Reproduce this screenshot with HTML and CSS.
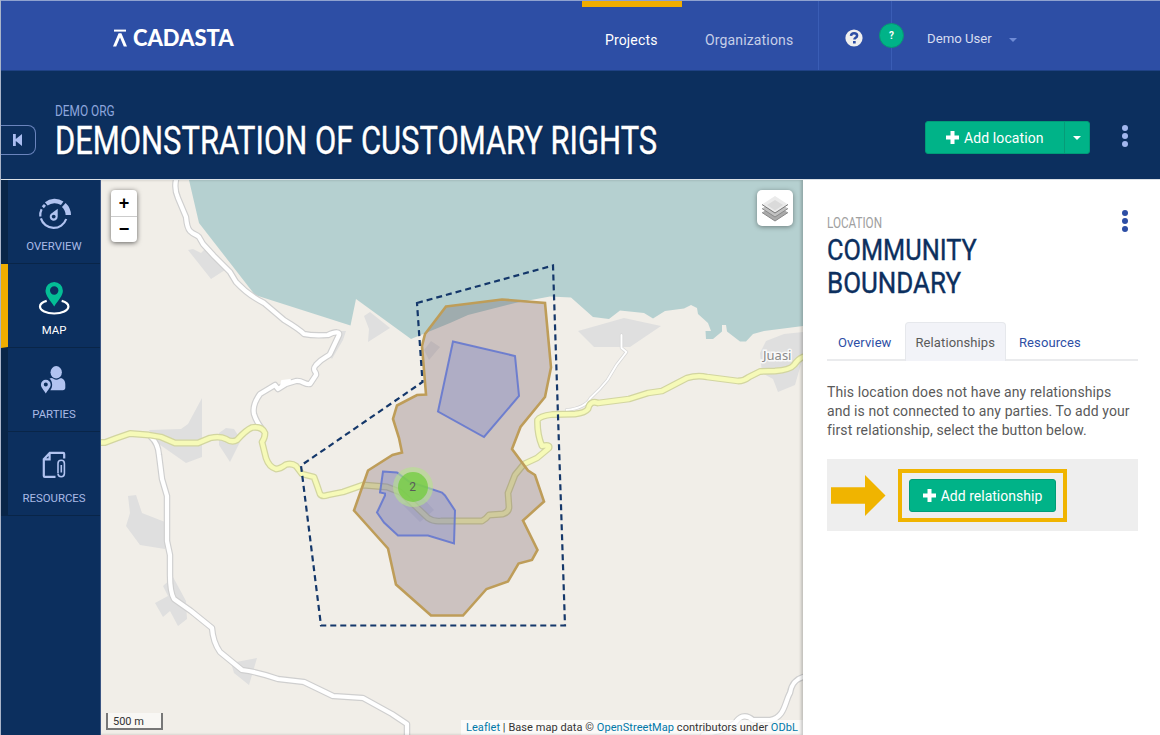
FILE: index.html
```html
<!DOCTYPE html>
<html lang="en">
<head>
<meta charset="utf-8">
<title>Demonstration of Customary Rights</title>
<link rel="stylesheet" href="styles.css">
</head>
<body>
<div class="app">
  <header class="topbar">
    <div class="brand">
      <svg class="brand-mark" viewBox="0 0 14 18" width="14" height="18"><path d="M1 1.600h12" stroke="#fff" stroke-width="2"/><path d="M5.600 4.200h2.800L14 17.500h-3.200L7 8.500l-3.800 9H0z" fill="#fff"/></svg>
      <span class="brand-name">CADASTA</span>
    </div>
    <nav class="nav">
      <a class="nav-link current">Projects</a>
      <a class="nav-link">Organizations</a>
    </nav>
    <div class="help">
      <svg width="18" height="18" viewBox="0 0 18 18"><circle cx="9" cy="9" r="8.600" fill="#efefef"/><path d="M6 6.800C6.200 4.900 7.400 4.200 9.100 4.200c1.700 0 3 1 3 2.500 0 2.100-2.700 2.100-2.700 3.900" fill="none" stroke="#2d4ea5" stroke-width="2.500"/><path d="M8 12h2.700v2.500H8z" fill="#2d4ea5"/></svg>
    </div>
    <div class="user">
      <span class="avatar">?</span>
      <span class="user-name">Demo User</span>
      <span class="caret"></span>
    </div>
  </header>

  <section class="project">
    <button class="collapse" aria-label="Collapse"><svg width="10" height="12" viewBox="0 0 10 12"><path d="M0 0h2.800v5L9 0v12L2.800 7v5H0z" fill="#aabdf0"/></svg></button>
    <div class="project-title">
      <div class="org"><span>DEMO ORG</span></div>
      <h1><span>DEMONSTRATION OF CUSTOMARY RIGHTS</span></h1>
    </div>
    <div class="btn split">
      <span class="split-main"><svg width="13" height="13" viewBox="0 0 13 13"><path d="M4.500 0h4v4.500H13v4H8.500V13h-4V8.500H0v-4h4.500z" fill="#fff"/></svg>Add location</span>
      <span class="split-toggle"><i class="caret white"></i></span>
    </div>
    <div class="dots light"><i></i><i></i><i></i></div>
  </section>

  <main class="content">
    <aside class="sidebar">
      <a class="side-item">
        <svg width="36" height="34" viewBox="0 0 36 34" fill="none" stroke="#b1c3f0"><path d="M5.600 11.300A13.300 13.300 0 0 0 4.300 18.500M4.900 20.400A13.300 13.300 0 0 0 30.200 21" stroke-width="2.200"/><path d="M6.800 9.300l2.200-2.400" stroke-width="2.800"/><path d="M10.300 5.900A13.300 13.300 0 0 1 26.200 5.300" stroke-width="4.400"/><path d="M27.800 7A14 14 0 0 1 32.300 17" stroke-width="5.400"/><path d="M21.700 10.800v7.800a4 4 0 1 1-7-2.500z" fill="#b1c3f0" stroke="none"/><circle cx="17.700" cy="18.600" r="1.900" fill="#0c2f5e" stroke="none"/></svg>
        <span>OVERVIEW</span>
      </a>
      <a class="side-item active">
        <svg width="36" height="34" viewBox="0 0 36 34"><path d="M10.700 18.900C6.500 20 4 21.600 4 24.600c0 4 6.300 6.900 14.200 6.900s14.200-2.900 14.200-6.900c0-3-2.500-4.600-6.700-5.700" fill="none" stroke="#fff" stroke-width="2.200"/><path fill-rule="evenodd" d="M18.200 0a8.700 8.700 0 0 0-8.700 8.700c0 5 4.500 9 8.700 15.800 4.200-6.800 8.700-10.800 8.700-15.800A8.700 8.700 0 0 0 18.200 0zm0 4.300a4.200 4.200 0 1 1 0 8.400 4.200 4.200 0 0 1 0-8.400z" fill="#04be96"/></svg>
        <span>MAP</span>
      </a>
      <a class="side-item">
        <svg width="36" height="34" viewBox="0 0 36 34" fill="#b1c3f0"><ellipse cx="20.200" cy="6.300" rx="5.700" ry="6.200"/><path d="M13.500 12.600c1.800-.8 3-.6 4 .1 1.800 1.300 4 1.200 5.800 0 2.600-1.600 6 1 6 5.500v3.600c0 1.500-1 2.400-2.500 2.400H14.300c1.500-2 2-4 1.800-6.200-.2-2.300-1.200-4.300-2.600-5.400z"/><path fill-rule="evenodd" d="M9.800 13.800A4.900 4.900 0 0 0 4.900 18.700c0 2.900 2.900 5.200 4.900 8.700 2-3.500 4.900-5.800 4.900-8.700a4.900 4.900 0 0 0-4.900-4.900zm0 2.800a2 2 0 1 1 0 4 2 2 0 0 1 0-4z"/></svg>
        <span>PARTIES</span>
      </a>
      <a class="side-item">
        <svg width="36" height="34" viewBox="0 0 36 34" fill="none" stroke="#b1c3f0" stroke-width="2.200"><path d="M19.500 26.900H8.800a1 1 0 0 1-1-1V9.200l6-6.300h13.400a1 1 0 0 1 1 1v4.600M8 9.400h5.600V3.200"/><path d="M25.300 15v7.500M22 23v-9.500a3.200 3.200 0 0 1 6.400 0v10a3.200 3.200 0 0 1-6.400 0" stroke-width="1.600"/></svg>
        <span>RESOURCES</span>
      </a>
    </aside>

    <section class="map">
      <svg class="map-canvas" viewBox="101 180 702 555" width="702" height="555">
        <defs>
          <path id="r1" d="M176 180q-2 9 2 18l8 19q1 11 4 14c4 4 6 3 9 6l4 7 11 12 16 16 6 10q12 13 28 21l20 17q15 9 20 14 9 2 24 1c8-4 12-3 11 0l-9 19c-2 3-7 3-14 11-5 6 1 6 0 10l-6 9c-6 1-7-4-14-3l-10 3-8 5-3-4-15 9q-8 11-6 20 2 7 8 15"/>
          <path id="r2" d="M151 437q7 6 8 18l3 24 5 17v45l3 14v20q0 17 4 24l17 12 21 17q1 14 8 24l22 18q16 2 36 9l26 3 29 14 30 2 29 16 15 10v12"/>
          <path id="r3" d="M803 677c-10 3-12 10-13 16-5 8-5 25-20 27h-17c-8-7-14-3-18 3l-12 7-20 5"/>
          <path id="r4" d="M621.500 335v13l5 4-10 13-9 15q-7 9-17 18-5 10-24 12"/>
          <path id="y1" d="M101 442.500H105L117 438 130 433.500 149 435 161 437 175 443 198 443 210 438Q220 436 226 439 232 443 237 440 246 430 252 427.500 262 426 265 433 265 438 262 442L266 458Q269 467 276 469 280 469 286 464.500 292 463 296 466L302 474 314 477Q317 485 320 494 322 497 328 495L343 492 363 485 387 487 400 492 410 501 428 518Q434 522 441 521H482Q486 519 489 515L503 514Q509 512 509 507L508 493 515 475 524 464 537 458 549 448Q550 444 542 446 537 434 537.500 420 540 416 552 414.500L575 414Q585 413 588 409 590 400 598 403L629 399 648 393 662 391 687 378Q697 375 707 377L738 381Q744 381 749 377L760 371.500 775 371Q790 370 794 365 798 359 803 357"/>
        </defs>
        <rect x="101" y="180" width="702" height="555" fill="#f1eee8"/>
        <path d="M189 180L199 223 255 295 350.500 325.500 356 299 411 339 450 323 468 315 515 303 550 296.500 571 297.500 593 317 609 319 620 310.500 644 313 653 318.500 665 311 684 308.500 691 305 697 308 698 314 708 323 711 331 705.500 331 706 339 713 339 722 331.500 722 325 726 325 727 331.500 740 341.500 746 341.500 753 334 764 331 803 326V180z" fill="#b5d0d0"/>
        <path fill="#dfdfdf" d="M188 250l5-1 8 4 4-4 20 21-14 9zM364 316l6-4 20 16-22 14 1-13zM424 350l7-9 9 6-11 13zM149 430l32-1 7-5 14-26v59l-16 6-30-21zM219 433l7-5 8 1 7 11-11 22-11-17zM346 331h-8l-8 25 2 3 11-19zM578 331l46-13 37 8-31 21h-36zM760 353l6-12 18-7 19-2v25l-8 28-17 7-5-13-11-6zM128 496l8-1 6 18 23 9v27l-25-4-14-19 4-13zM155 603l13-7-5-10 10-9 13 24 1 18-9 7-8-15-7 6zM231 663l26-5-8 27-15-12zM402 504l20-7 12 13-14 12z"/>
        <g fill="none" stroke-linejoin="round" stroke-linecap="round">
          <g stroke="#cfcfcf" stroke-width="6.500"><use href="#r1"/><use href="#r2"/><use href="#r3"/></g>
          <use href="#r4" stroke="#d6d6d6" stroke-width="3.400"/>
          <g stroke="#fff" stroke-width="4.200"><use href="#r1"/><use href="#r2"/><use href="#r3"/></g>
          <use href="#r4" stroke="#fff" stroke-width="1.900"/>
          <path d="M282 381l8-1-2 4-7 2z" fill="#fff" stroke="#fff" stroke-width="2"/>
          <use href="#y1" stroke="#d2d5a0" stroke-width="6.800"/>
          <use href="#y1" stroke="#f6fab8" stroke-width="4.300"/>
        </g>
        <path d="M446 306.500L502 299.500 545 303 551 367.500 545 397 520.500 427 512 449 528 470.500 535 475 544 501.500 523 520.500 537.500 550 532 560 518.500 563.500 508 581.500 486.500 589 463 615.500H431L396 584.500 388 548.500 354 510.500 368 470.500 392.500 455 402 452.500 399 438 393 419 397 405.500 417 395 426 394.500 422 346 425 334z" fill="#5e4048" fill-opacity=".25" stroke="#be9d59" stroke-width="2.600"/>
        <path d="M453 341.500L515 356 519 396 484 437 438 411.500zM383 471.500l14 1 12 9 33 11 3 3 10 15-1 33-26-8h-30l-14-13-7-10 8-17v-2l-5-1z" fill="#6377d5" fill-opacity=".28" stroke="#6578cf" stroke-width="2" stroke-opacity=".9"/>
        <path d="M417 303L553 265.500 565 625.500H321L301 465.500 422.500 382z" fill="none" stroke="#14376a" stroke-width="2.200" stroke-dasharray="6 4"/>
        <text class="place" x="763" y="360">Juasi</text>
      </svg>
      <div class="zoomer"><b>+</b><b>−</b></div>
      <div class="layers"><svg width="28" height="28" viewBox="0 0 28 28"><path d="M1 18.500l13 8.500 13-8.500-13-8z" fill="#aaa"/><path d="M1 18.500l13 8.500 13-8.500" fill="none" stroke="#888"/><path d="M1 14.500l13 8.500 13-8.500-13-8z" fill="#c2c2c2"/><path d="M1 14.500l13 8.500 13-8.500" fill="none" stroke="#8a8a8a"/><path d="M1 10.500l13 8.500 13-8.500-13-8.500z" fill="#ebebeb"/><path d="M1 10.500l13 8.500 13-8.500" fill="none" stroke="#777"/><path d="M6 11l8-5 8 5-8 5.500z" fill="#dadada"/></svg></div>
      <div class="cluster"><span>2</span></div>
      <div class="scale">500 m</div>
      <div class="credit"><a>Leaflet</a> | Base map data © <a>OpenStreetMap</a> contributors under <a>ODbL</a></div>
    </section>

    <section class="panel">
      <div class="panel-head">
        <div>
          <div class="kind"><span>LOCATION</span></div>
          <h2><span>COMMUNITY</span><br><span class="line-2">BOUNDARY</span></h2>
        </div>
        <div class="dots"><i></i><i></i><i></i></div>
      </div>
      <nav class="tabs"><a>Overview</a><a class="on">Relationships</a><a>Resources</a></nav>
      <p class="message">This location does not have any relationships<br>and is not connected to any parties. To add your<br>first relationship, select the button below.</p>
      <div class="callout">
        <svg class="arrow" width="55" height="41" viewBox="0 0 55 41"><path d="M0 12.300h34V0l20.500 20.500L34 41V28.700H0z" fill="#f0b400"/></svg>
        <div class="highlight"><span class="btn add"><svg width="13" height="13" viewBox="0 0 13 13"><path d="M4.500 0h4v4.500H13v4H8.500V13h-4V8.500H0v-4h4.500z" fill="#fff"/></svg>Add relationship</span></div>
      </div>
    </section>
  </main>
</div>
</body>
</html>
```
FILE: styles.css
```css
* { box-sizing: border-box; }
body { margin: 0; font: 14px/20px Roboto, sans-serif; color: #5a5a5a; }
.app { width: 1160px; height: 735px; overflow: hidden; display: flex; flex-direction: column; border-left: 1px solid #a9b4c9; }
h1, h2, p { margin: 0; font-weight: 400; }
svg { display: block; flex: none; }

.topbar { height: 71px; flex: none; display: flex; background: #2d4ea5; border-top: 1px solid #8fa2cf; border-bottom: 1px solid #1f4285; }
.brand { width: 581px; padding: 27px 0 0 112px; display: flex; gap: 6px; align-items: flex-start; }
.brand-mark { margin-top: 1px; }
.brand-name { font: 900 22px/20px Lato, sans-serif; color: #fff; letter-spacing: -.05px; }
.nav { display: flex; width: 236px; }
.nav-link { padding: 29px 23px 0; color: #c6cfe8; letter-spacing: .15px; }
.nav-link.current { width: 100px; color: #fff; border-top: 6px solid #f0ad00; padding: 23px 0 0 23px; }
.help { width: 73px; border-left: 1px solid #3a5db5; padding: 28px 0 0 26px; }
.user { flex: 1; border-left: 1px solid #3a5db5; position: relative; display: flex; padding: 28px 0 0 35px; color: #d7ddf0; }
.user-name { font-size: 13.200px; }
.avatar { position: absolute; left: -13px; top: 22px; width: 25px; height: 25px; border-radius: 50%; background: #00b388; border: 1px solid #079673; color: #fff; font: 700 10px/23px Roboto, sans-serif; text-align: center; }
.caret { border: 4px solid transparent; border-top-color: #6f8bd6; border-bottom: 0; align-self: flex-start; margin: 9px 0 0 17px; }
.caret.white { border-top-color: #fff; margin: 0; align-self: center; }

.project { height: 108px; flex: none; display: flex; background: #0c2f5e; }
.collapse { width: 35px; height: 30px; margin-top: 54px; border: 1px solid #6a84bd; border-left: 0; border-radius: 0 8px 8px 0; background: none; padding: 0 0 0 12px; }
.project-title { padding: 31px 0 0 19px; width: 889px; white-space: nowrap; }
.project-title span, .kind span, h2 span { display: inline-block; transform-origin: 0 50%; }
.org { font-size: 14px; line-height: 18px; color: #8ea6dd; }
.org span { transform: scaleX(.85); }
h1 { font-size: 38px; line-height: 42px; color: #fff; text-shadow: 0 1px 2px #001a40; -webkit-text-stroke: .4px #fff; }
h1 span { transform: scaleX(.813); }
.btn { display: flex; background: #00b388; border: 1px solid #009c77; border-radius: 3px; color: #fff; font-size: 14px; height: 33px; letter-spacing: .1px; white-space: nowrap; }
.split { margin-top: 50px; width: 165px; }
.split-main { flex: 1; display: flex; align-items: center; gap: 5px; padding-left: 20px; }
.split-toggle { width: 25px; display: flex; justify-content: center; border-left: 1px solid #079b78; }
.dots { display: flex; flex-direction: column; gap: 2px; }
.dots i { width: 6px; height: 6px; border-radius: 50%; background: #2d4ea5; }
.dots.light { margin: 54px 0 0 32px; }
.dots.light i { background: #a3b7ee; }

.content { height: 556px; display: flex; border-top: 1px solid #dce1e6; }
.sidebar { width: 100px; flex: none; background: #0c2f5e; border-right: 1px solid #3b5584; }
.side-item { display: flex; flex-direction: column; align-items: center; height: 84px; padding: 18px 0 0; border-left: 7px solid #092548; border-bottom: 1px solid #092548; color: #a9bae6; font-size: 11.400px; line-height: 16px; }
.side-item span { margin-top: 6px; }
.side-item.active { border-left-color: #f0ad00; color: #fff; }

.map { width: 702px; position: relative; overflow: hidden; }
.map::after { content: ""; position: absolute; inset: 0; box-shadow: inset -2px 0 3px #0003; pointer-events: none; }
.place { font: 13px "Noto Sans", sans-serif; fill: #8a8a8a; stroke: #fff; stroke-width: 3px; stroke-opacity: .8; paint-order: stroke; }
.zoomer { position: absolute; left: 10px; top: 10px; width: 26px; height: 52px; border-radius: 4px; background: #fff; box-shadow: 0 1px 5px #0009; color: #000; text-align: center; }
.zoomer b { display: block; height: 26px; font: 700 18px/27px "Liberation Sans", sans-serif; }
.zoomer b + b { border-top: 1px solid #ccc; line-height: 25px; }
.layers { position: absolute; left: 656px; top: 10px; width: 36px; height: 36px; border-radius: 5px; background: #fff; box-shadow: 0 1px 5px #0006; padding: 4px; }
.cluster { position: absolute; left: 291.500px; top: 286.500px; width: 40px; height: 40px; border-radius: 50%; background: #b5e28c99; padding: 5px; }
.cluster span { display: block; border-radius: 50%; background: #6ecc39b8; text-align: center; font-size: 12px; line-height: 30px; }
.scale { position: absolute; left: 5px; top: 533px; width: 57px; height: 17px; border: 2px solid #777; border-top: 0; background: #fff8; padding-left: 5px; font-size: 11px; line-height: 17px; color: #333; }
.credit { position: absolute; right: 0; bottom: -1px; background: #ffffffb3; padding: 0 5px; font-size: 11px; letter-spacing: .06px; line-height: 16px; white-space: nowrap; color: #333; }
.credit a { color: #0078a8; }

.panel { flex: 1; background: #fff; padding: 30px 22px 0 24px; }
.panel-head { display: flex; justify-content: space-between; height: 112px; padding-right: 10px; }
.kind { color: #a0a0a0; font-size: 14px; line-height: 26px; }
.kind span { transform: scaleX(.835); }
h2 { font-size: 30px; line-height: 33px; color: #0c2f5e; margin-top: -3px; -webkit-text-stroke: .4px #0c2f5e; }
h2 span { transform: scaleX(.845); }
h2 .line-2 { transform: scaleX(.865); }
.tabs { display: flex; height: 39px; border-bottom: 2px solid #eaebed; }
.tabs a { padding: 0 10px; height: 39px; line-height: 39px; border: 1px solid transparent; border-bottom: 0; color: #2d4ea5; font-size: 13px; letter-spacing: .1px; }
.tabs .on { background: #f2f3f8; border-color: #e6e8ec; border-radius: 4px 4px 0 0; color: #5a5a5a; margin: 0 2px; }
.message { margin-top: 22px; line-height: 19px; letter-spacing: .1px; white-space: nowrap; }
.callout { margin-top: 19px; height: 72px; background: #eee; display: flex; align-items: center; padding: 1px 0 0 4px; gap: 12px; }
.highlight { border: 4px solid #f0b400; padding: 6px 7px; height: 53px; }
.add { width: 147px; align-items: center; justify-content: center; gap: 5px; height: 33px; letter-spacing: .02px; }
```
